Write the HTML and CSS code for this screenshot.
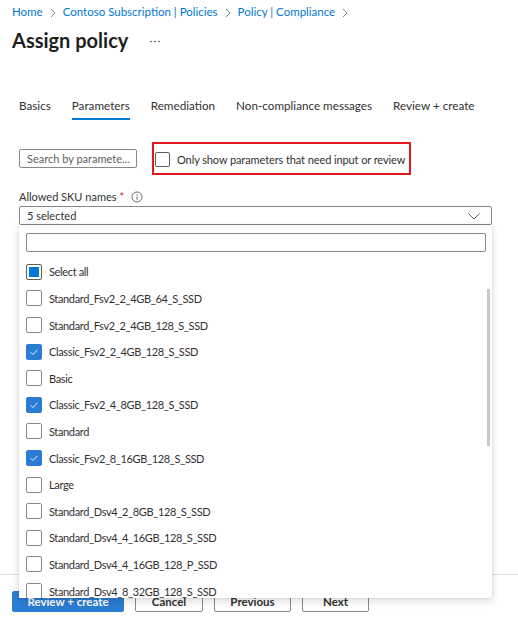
FILE: index.html
```html
<!DOCTYPE html>
<html lang="en">
<head>
<meta charset="utf-8">
<title>Assign policy</title>
<link rel="stylesheet" href="styles.css">
</head>
<body>
<div class="page">
  <div class="content">
    <nav class="crumbs">
      <span class="crumb">Home</span>
      <svg class="sep" viewBox="0 0 6 10" width="6" height="10"><path d="M1 1l4 4-4 4" fill="none" stroke="#8a8886" stroke-width="1"/></svg>
      <span class="crumb">Contoso Subscription | Policies</span>
      <svg class="sep" viewBox="0 0 6 10" width="6" height="10"><path d="M1 1l4 4-4 4" fill="none" stroke="#8a8886" stroke-width="1"/></svg>
      <span class="crumb">Policy | Compliance</span>
      <svg class="sep" viewBox="0 0 6 10" width="6" height="10"><path d="M1 1l4 4-4 4" fill="none" stroke="#8a8886" stroke-width="1"/></svg>
    </nav>
    <div class="title-row">
      <h1 class="title">Assign policy</h1>
      <svg class="more" viewBox="0 0 10 3" width="10" height="3"><circle cx="1" cy="1.5" r="0.8" fill="#323130"/><circle cx="5" cy="1.5" r="0.8" fill="#323130"/><circle cx="9" cy="1.5" r="0.8" fill="#323130"/></svg>
    </div>
    <div class="tabs">
      <span class="tab">Basics</span>
      <span class="tab active">Parameters</span>
      <span class="tab">Remediation</span>
      <span class="tab">Non-compliance messages</span>
      <span class="tab">Review + create</span>
    </div>
    <div class="filter-row">
      <div class="search">Search by paramete...</div>
      <div class="highlight">
        <span class="cb"></span>
        <span class="hl-label">Only show parameters that need input or review</span>
      </div>
    </div>
    <div class="field">
      <div class="field-label">Allowed SKU names <span class="req">*</span>
        <svg class="info" viewBox="0 0 12 12" width="12" height="12"><circle cx="6" cy="6" r="5" fill="none" stroke="#605e5c" stroke-width="0.9"/><path d="M6 5.2v3.6" stroke="#605e5c" stroke-width="0.9"/><circle cx="6" cy="3.7" r="0.6" fill="#605e5c"/></svg>
      </div>
      <div class="dropdown">
        <span>5 selected</span>
        <svg class="chev" viewBox="0 0 12 7" width="12" height="7"><path d="M0.5 0.5l5.5 5.5 5.5-5.5" fill="none" stroke="#605e5c" stroke-width="1"/></svg>
        <div class="panel">
          <div class="panel-search"></div>
          <div class="opts">
            <div class="opt"><span class="box partial"><span class="dot"></span></span>Select all</div>
            <div class="opt"><span class="box"></span>Standard_Fsv2_2_4GB_64_S_SSD</div>
            <div class="opt"><span class="box"></span>Standard_Fsv2_2_4GB_128_S_SSD</div>
            <div class="opt"><span class="box on"><svg viewBox="0 0 16 16" width="16" height="16"><path d="M4.2 8.3l2.6 2.6 5-5.4" fill="none" stroke="#fff" stroke-width="1"/></svg></span>Classic_Fsv2_2_4GB_128_S_SSD</div>
            <div class="opt"><span class="box"></span>Basic</div>
            <div class="opt"><span class="box on"><svg viewBox="0 0 16 16" width="16" height="16"><path d="M4.2 8.3l2.6 2.6 5-5.4" fill="none" stroke="#fff" stroke-width="1"/></svg></span>Classic_Fsv2_4_8GB_128_S_SSD</div>
            <div class="opt"><span class="box"></span>Standard</div>
            <div class="opt"><span class="box on"><svg viewBox="0 0 16 16" width="16" height="16"><path d="M4.2 8.3l2.6 2.6 5-5.4" fill="none" stroke="#fff" stroke-width="1"/></svg></span>Classic_Fsv2_8_16GB_128_S_SSD</div>
            <div class="opt"><span class="box"></span>Large</div>
            <div class="opt"><span class="box"></span>Standard_Dsv4_2_8GB_128_S_SSD</div>
            <div class="opt"><span class="box"></span>Standard_Dsv4_4_16GB_128_S_SSD</div>
            <div class="opt"><span class="box"></span>Standard_Dsv4_4_16GB_128_P_SSD</div>
            <div class="opt"><span class="box"></span>Standard_Dsv4_8_32GB_128_S_SSD</div>
          </div>
          <div class="scrollbar"></div>
        </div>
      </div>
    </div>
  </div>
  <footer class="footer">
    <button class="btn primary">Review + create</button>
    <button class="btn cancel">Cancel</button>
    <button class="btn prev">Previous</button>
    <button class="btn next">Next</button>
  </footer>
</div>
</body>
</html>
```
FILE: styles.css
```css
* { box-sizing: border-box; }
html, body { margin: 0; padding: 0; background: #fff; }
body {
  font-family: "Lato", "Noto Sans", sans-serif;
  color: #323130;
  font-size: 11px;
}
.page {
  width: 518px;
  height: 626px;
  display: flex;
  flex-direction: column;
  overflow: hidden;
}
.content {
  flex: 1;
  padding: 4px 12px 0 12px;
}
.crumbs {
  display: flex;
  align-items: center;
  gap: 7px;
  height: 16px;
  font-size: 11.5px;
  line-height: 16px;
  white-space: nowrap;
}
.crumb { color: #0078d4; }
.sep { flex: none; margin-top: 1px; }
.title-row {
  display: flex;
  align-items: center;
  gap: 22px;
  margin-top: 6px;
  height: 28px;
}
.title {
  margin: 0;
  font-size: 20px;
  font-weight: 700;
  line-height: 28px;
  color: #201f1e;
  white-space: nowrap;
}
.more { margin-top: 2px; }
.tabs {
  display: flex;
  gap: 21px;
  margin: 41px 0 0 7px;
  font-size: 11.7px;
  white-space: nowrap;
}
.tab {
  line-height: 20px;
  padding-bottom: 3px;
  border-bottom: 2px solid transparent;
}
.tab.active { border-bottom-color: #0078d4; }
.filter-row {
  display: flex;
  align-items: center;
  margin: 22px 0 0 7px;
  gap: 15px;
}
.search {
  width: 118px;
  height: 19px;
  border: 1px solid #8a8886;
  border-radius: 2px;
  padding: 0 7px;
  font-size: 11px;
  line-height: 17px;
  color: #605e5c;
  white-space: nowrap;
  overflow: hidden;
}
.highlight {
  width: 259px;
  height: 33px;
  border: 2px solid #e3171e;
  display: flex;
  align-items: center;
  gap: 7px;
  padding-left: 1px;
  padding-top: 1px;
}
.cb {
  width: 15px;
  height: 15px;
  border: 1px solid #605e5c;
  border-radius: 2px;
  flex: none;
}
.hl-label { font-size: 11px; letter-spacing: -0.1px; white-space: nowrap; }
.field { margin: 14px 0 0 7px; }
.field-label {
  display: flex;
  align-items: center;
  gap: 3px;
  height: 16px;
  line-height: 16px;
  font-size: 11px;
  white-space: nowrap;
}
.req { color: #c4262c; }
.info { margin-left: 4px; }
.dropdown {
  position: relative;
  margin-top: 1px;
  width: 473px;
  height: 19px;
  border: 1px solid #8a8886;
  border-radius: 2px;
  display: flex;
  align-items: center;
  justify-content: space-between;
  padding: 0 11px 0 7px;
  font-size: 11px;
}
.chev { margin-top: 1px; }
.panel {
  position: absolute;
  top: 18px;
  left: -1px;
  width: 473px;
  height: 373px;
  background: #fff;
  box-shadow: 0 3px 8px rgba(0,0,0,0.14), 0 0 2px rgba(0,0,0,0.12);
  overflow: hidden;
  padding: 8px 6px 0 7px;
  z-index: 2;
}
.panel-search {
  height: 19px;
  border: 1px solid #8a8886;
  border-radius: 2px;
}
.opts { margin-top: 6.6px; }
.opt {
  display: flex;
  align-items: center;
  gap: 7px;
  height: 26.6px;
  font-size: 11px;
  letter-spacing: -0.35px;
  white-space: nowrap;
}
.box {
  width: 16px;
  height: 16px;
  border: 1px solid #8a8886;
  border-radius: 2px;
  flex: none;
  display: flex;
  align-items: center;
  justify-content: center;
}
.box.partial { border-color: #605e5c; }
.dot { width: 10px; height: 10px; background: #0078d4; }
.box.on { background: #2b7cd3; border-color: #2b7cd3; }
.box.on svg { display: block; }
.scrollbar {
  position: absolute;
  left: 468px;
  top: 64px;
  width: 3px;
  height: 157px;
  background: #c8c6c4;
}
.footer {
  height: 52px;
  border-top: 1px solid #e1dfdd;
  padding: 16px 0 0 12px;
  display: flex;
  gap: 11px;
  align-items: flex-start;
}
.btn {
  height: 21px;
  border: 1px solid #8a8886;
  border-radius: 2px;
  background: #fff;
  font-family: "Lato", "Noto Sans", sans-serif;
  font-size: 11.5px;
  font-weight: 700;
  color: #323130;
  padding: 0;
}
.btn.primary { width: 112px; background: #2b7cd3; border-color: #2b7cd3; color: #fff; }
.btn.cancel { width: 68px; }
.btn.prev { width: 77px; }
.btn.next { width: 67px; }
```
